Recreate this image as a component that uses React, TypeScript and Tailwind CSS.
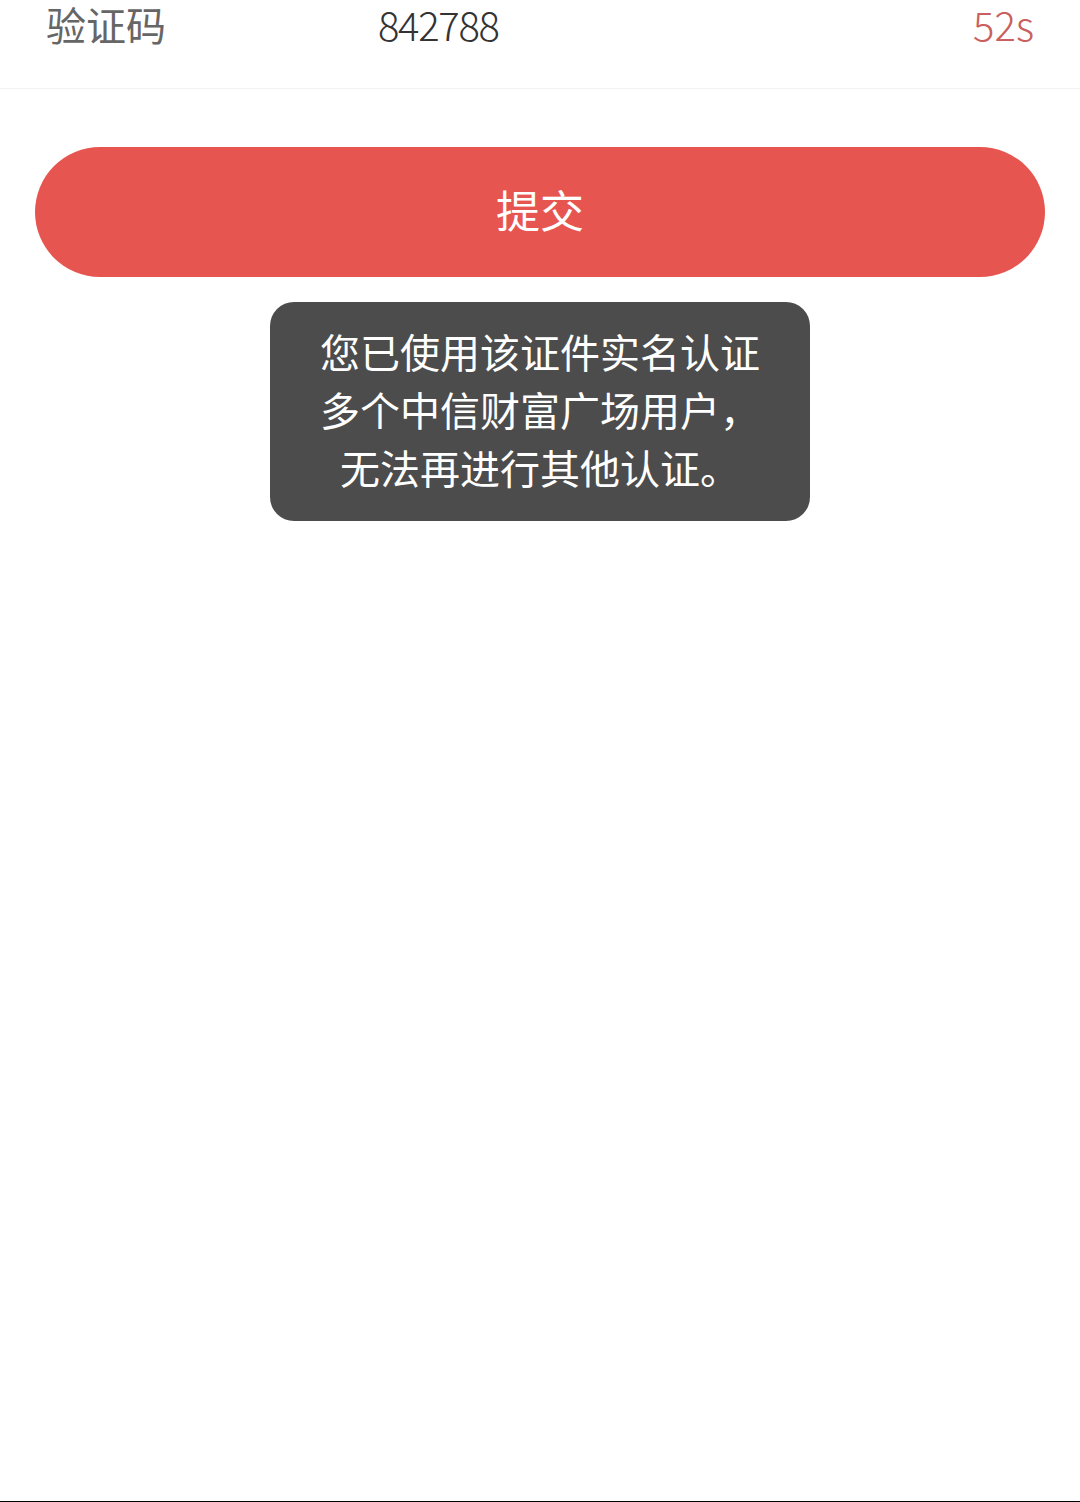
const FONT = "font-['Noto_Sans_CJK_SC','Noto_Sans',sans-serif]"

export default function App() {
  return (
    <div className={`flex h-[1502px] w-[1080px] flex-col overflow-hidden bg-white ${FONT}`}>
      {/* Verification code row */}
      <div className="flex h-[89px] items-start border-b border-[#f2f2f2] pl-[46px] pr-[46px]">
        <span className="w-[332px] text-[40px] leading-[48px] text-[#666666]">验证码</span>
        <span className="flex-1 text-[40px] leading-[48px] font-light tracking-[-1.3px] text-[#333333]">842788</span>
        <span className="text-[40px] leading-[48px] font-light text-[#c9605e]">52s</span>
      </div>

      {/* Submit */}
      <button
        type="button"
        className="mx-[35px] mt-[58px] h-[130px] rounded-[65px] bg-[#e75550] pb-[6px] text-[44px] font-normal text-white"
      >
        提交
      </button>

      {/* Toast */}
      <div className="mx-auto mt-[25px] flex h-[219px] w-[540px] flex-col items-center justify-center rounded-[24px] bg-[#4c4c4c] pb-[6px] text-center text-[40px] leading-[58px] text-white">
        <p>您已使用该证件实名认证</p>
        <p>多个中信财富广场用户，</p>
        <p>无法再进行其他认证。</p>
      </div>

      <div className="mt-auto h-px bg-black" />
    </div>
  )
}
